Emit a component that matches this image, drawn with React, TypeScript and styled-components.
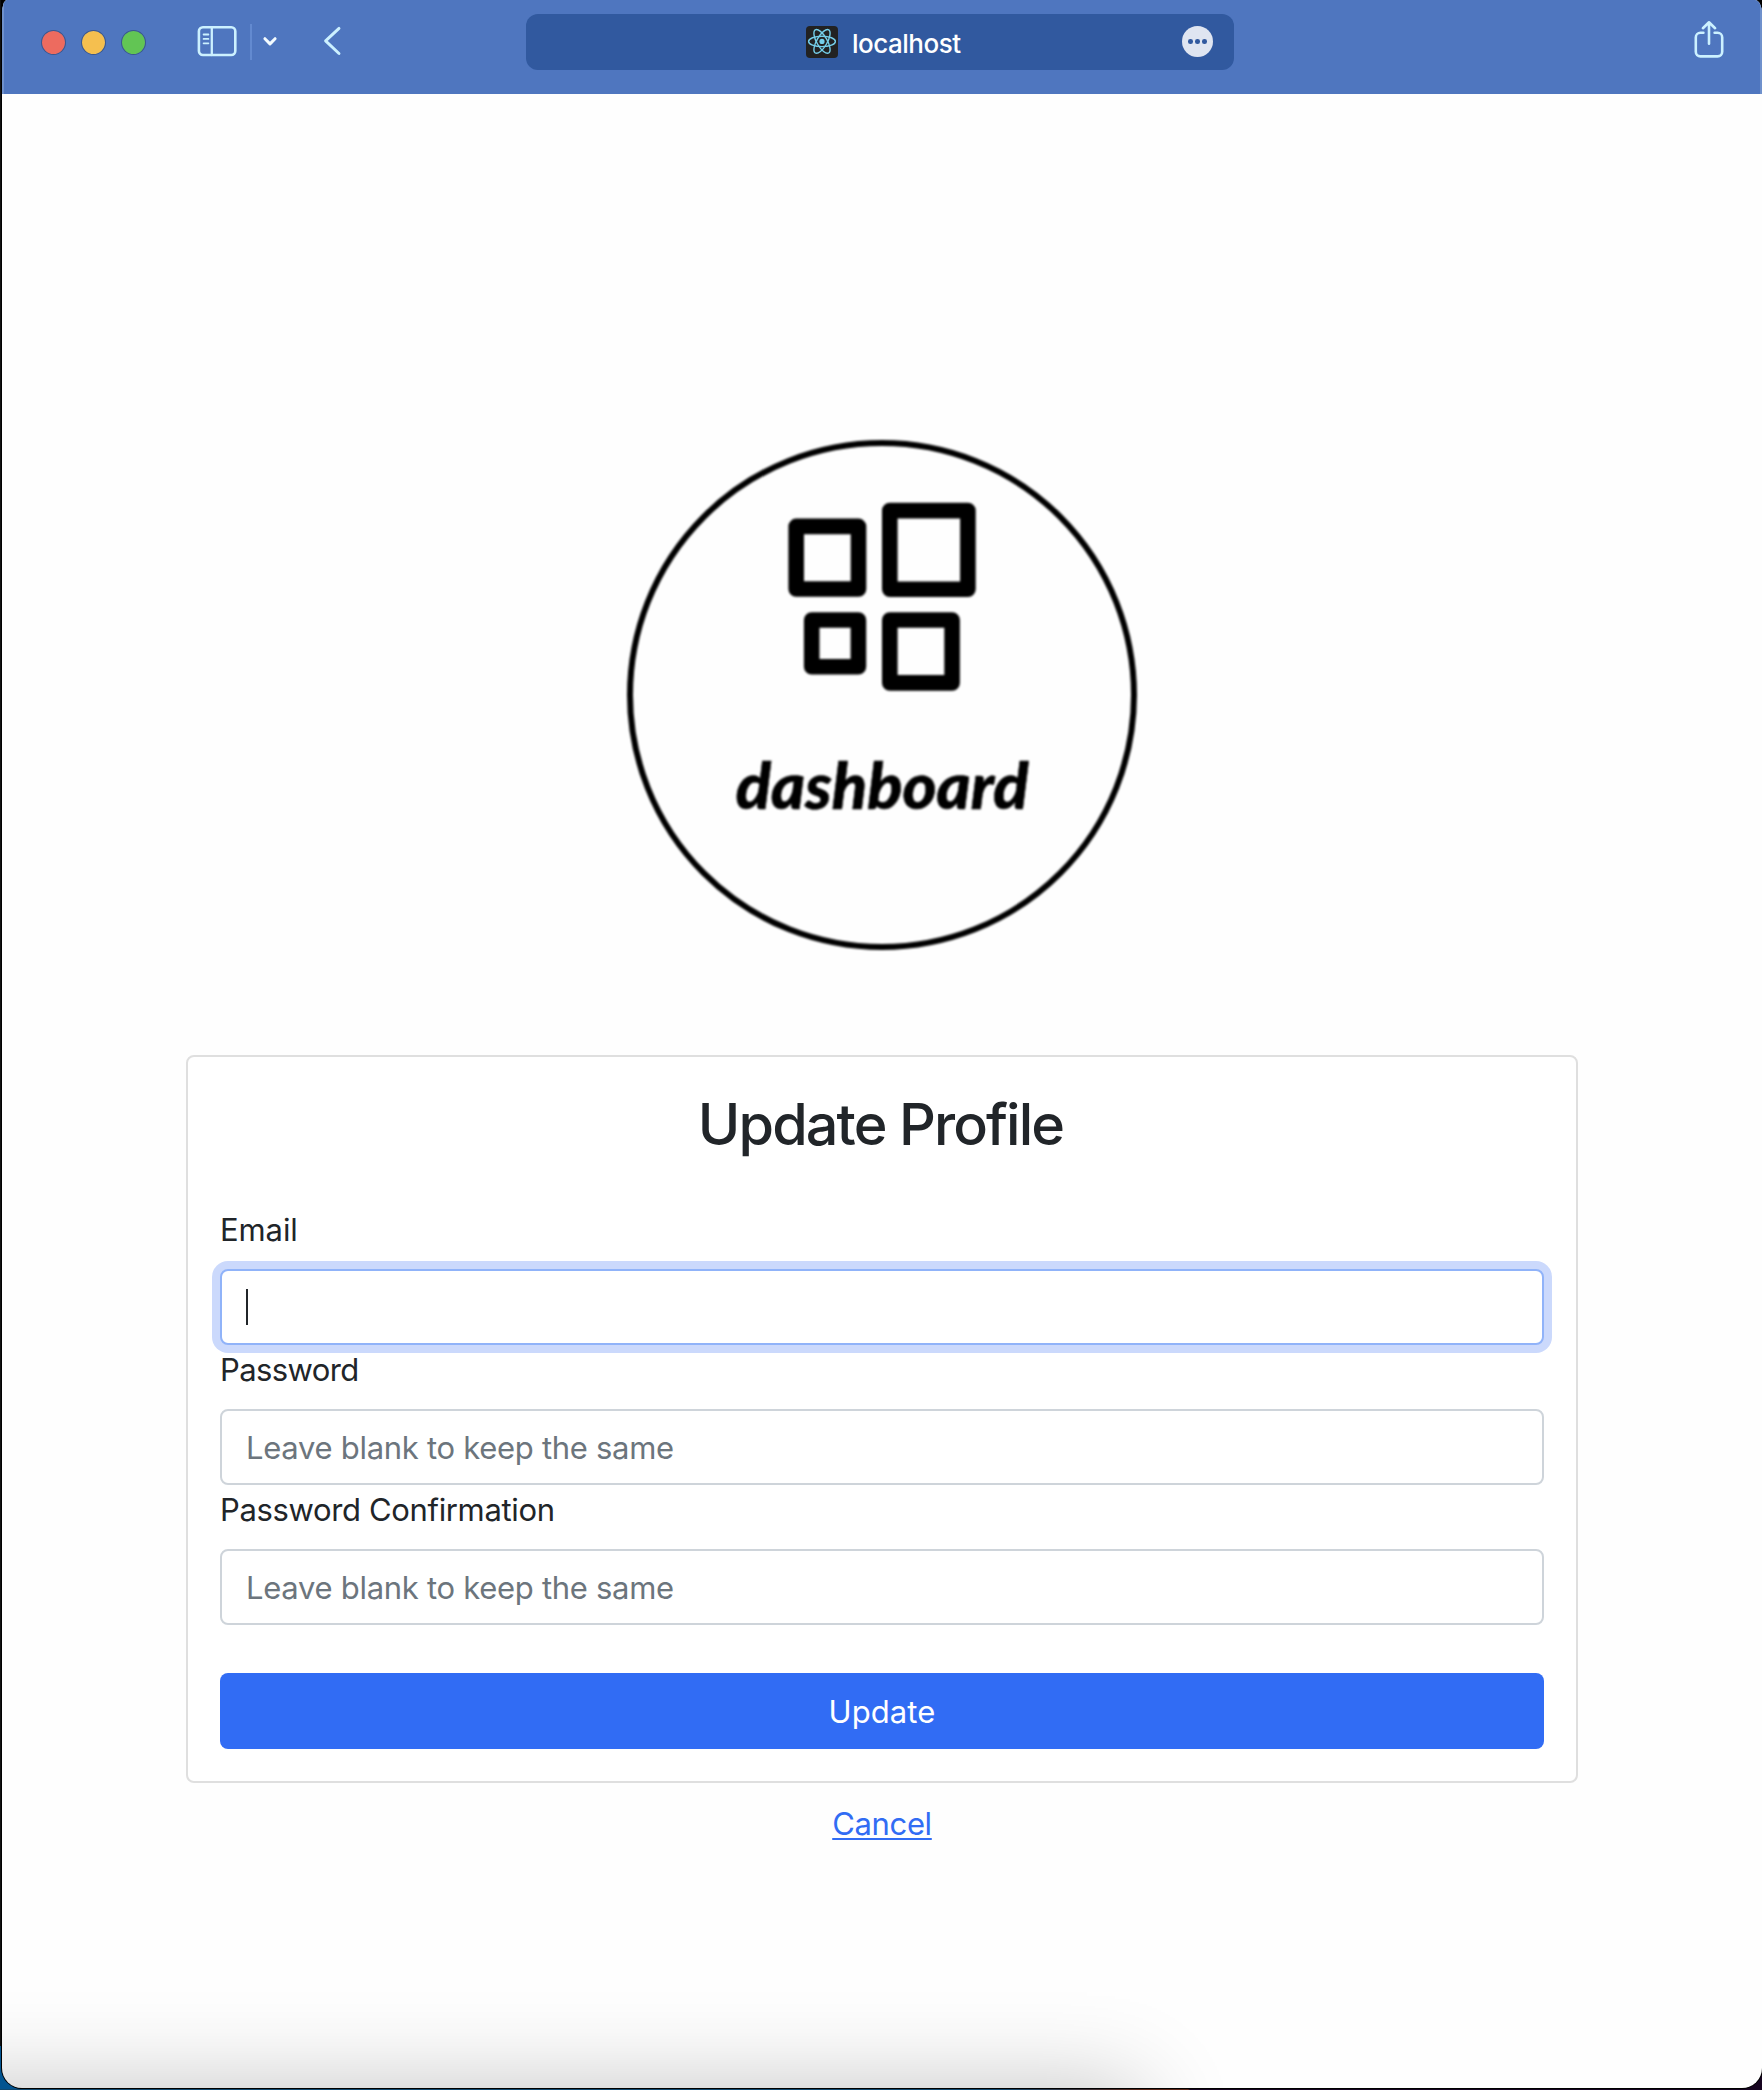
import React from "react";
import styled, { createGlobalStyle, css } from "styled-components";

const FONT = `Inter, "Liberation Sans", sans-serif`;
const INK = "#212529";
const BLUE = "#316cf4";
const ICON = "#ccf1ff";

const GlobalStyle = createGlobalStyle`
  *, *::before, *::after { box-sizing: border-box; }
  body {
    margin: 0;
    font-family: ${FONT};
    color: ${INK};
    background: #000;
  }
`;

const Desktop = styled.div`
  height: 2090px;
  padding: 0 0 2px 2px;
  overflow: hidden;
  background:
    linear-gradient(90deg, #10486f 0 1000px, #5a2417 1140px 1188px, #160420 1190px) 0 100% / 100% 1px no-repeat,
    linear-gradient(#035490, #035490) 0 100% / 20px 44px no-repeat,
    linear-gradient(#160420, #160420) 100% 100% / 30px 30px no-repeat,
    linear-gradient(90deg, #111 1px, #000 1px);
`;

const Window = styled.div`
  position: relative;
  display: flex;
  flex-direction: column;
  height: 2088px;
  background: #fefefe;
  overflow: hidden;
  border-radius: 5px 7px 20px 20px / 14px 14px 20px 20px;
  box-shadow: 0 0 0 1px #000;
`;

const FloorShade = styled.div`
  position: absolute;
  top: 100%;
  left: -200px;
  width: 1337px;
  height: 300px;
  box-shadow: 0 0 88px rgba(0, 0, 0, 0.24);
`;

const Toolbar = styled.header`
  display: grid;
  grid-template-columns: 522px 708px 1fr;
  align-items: center;
  flex: none;
  height: 94px;
  padding-bottom: 10px;
  background: #4f76bf;
  border: solid #6f91cc;
  border-width: 0 2px;
`;

const ToolGroup = styled.div`
  display: flex;
  align-items: center;
  padding-left: 37px;
`;

const TrafficLights = styled.div`
  display: flex;
  gap: 15px;
  margin-right: 51px;
`;

const Light = styled.span<{ $color: string }>`
  width: 25px;
  height: 25px;
  border-radius: 50%;
  border: 1px solid rgba(40, 60, 100, 0.55);
  background: ${(p) => p.$color};
  background-clip: padding-box;
`;

const Divider = styled.span`
  width: 2px;
  height: 36px;
  margin: 0 11px 0 12.5px;
  background: #638ad0;
`;

const Glyph = styled.svg`
  display: block;
  flex: none;
  fill: none;
  stroke: ${ICON};
  stroke-linecap: round;
  stroke-linejoin: round;
  overflow: visible;
`;

const ChevronGlyph = styled(Glyph)`
  stroke: #f3fbff;
`;

const BackGlyph = styled(Glyph)`
  margin-left: 47px;
`;

const AddressBar = styled.div`
  display: flex;
  align-items: center;
  height: 56px;
  padding: 0 21px 0 280px;
  border-radius: 12px;
  background: #31599f;
`;

const Favicon = styled.svg`
  width: 32px;
  height: 32px;
  margin-right: 14px;
  border-radius: 4px;
  background: #222;
`;

const Host = styled.span`
  padding-top: 2px;
  font-size: 26px;
  font-weight: 500;
  letter-spacing: -0.5px;
  color: #fff;
`;

const MoreButton = styled.span`
  display: flex;
  align-items: center;
  justify-content: center;
  gap: 2.6px;
  width: 31px;
  height: 31px;
  margin: -1px 0 0 auto;
  border-radius: 50%;
  background: #dfe5f1;
`;

const Dot = styled.i`
  width: 4.6px;
  height: 4.6px;
  border-radius: 50%;
  background: #31599f;
`;

const ShareSlot = styled.div`
  display: flex;
  justify-content: flex-end;
  padding-right: 36.5px;
`;

const Main = styled.main`
  display: flex;
  flex-direction: column;
  align-items: center;
  padding-top: 343px;
`;

const Logo = styled.svg`
  display: block;
  width: 516px;
  height: 516px;
  fill: none;
  stroke: #000;
  stroke-linejoin: round;
  filter: blur(0.8px);
`;

const LogoWord = styled.text`
  font: italic 900 65px Lato, sans-serif;
  fill: #000;
  stroke: #000;
  stroke-width: 0.6px;
`;

const Card = styled.section`
  width: 1392px;
  margin-top: 102px;
  padding: 32px;
  border: 2px solid #dfdfdf;
  border-radius: 8px;
  background: #fff;
`;

const Title = styled.h2`
  margin: 0 0 46px;
  padding-right: 3px;
  font-size: 57.5px;
  font-weight: 520;
  line-height: 70px;
  letter-spacing: -1.9px;
  text-align: center;
`;

const Field = styled.div`
  position: relative;
  display: flex;
  flex-direction: column;
`;

const Label = styled.label<{ $tracking?: string }>`
  padding-top: 1px;
  margin-bottom: 15px;
  font-size: 31px;
  font-weight: 430;
  line-height: 48px;
  letter-spacing: ${(p) => p.$tracking ?? "-0.35px"};
`;

const Input = styled.input<{ $focused?: boolean }>`
  width: 100%;
  height: 76px;
  padding: 0 24px;
  font: 430 31px ${FONT};
  letter-spacing: -0.29px;
  color: ${INK};
  background: #fff;
  border: 2px solid #ced4da;
  border-radius: 8px;
  outline: none;
  caret-color: transparent;
  &::placeholder {
    color: #6c757d;
    opacity: 1;
  }
  ${(p) =>
    p.$focused &&
    css`
      border-color: #90b3f9;
      box-shadow: 0 0 0 8px #cbd9fc;
    `}
`;

const Caret = styled.span`
  position: absolute;
  left: 26px;
  bottom: 20px;
  width: 2px;
  height: 36px;
  background: ${INK};
`;

const SubmitButton = styled.button`
  display: block;
  width: 100%;
  height: 76px;
  margin-top: 48px;
  padding: 0;
  border: 0;
  border-radius: 8px;
  background: ${BLUE};
  color: #fff;
  font: 430 31px ${FONT};
  letter-spacing: 0.1px;
`;

const CancelLink = styled.a`
  margin-top: 17px;
  font-size: 31px;
  font-weight: 430;
  line-height: 48px;
  letter-spacing: -0.35px;
  color: ${BLUE};
  text-decoration: underline;
  text-decoration-thickness: 2px;
  text-underline-offset: 3px;
`;

const LIGHTS = ["#ed6b5f", "#f5bf4f", "#62c554"];

const FIELDS = [
  { id: "email", label: "Email", tracking: "-0.1px", focused: true },
  { id: "password", label: "Password", tracking: "-0.6px", placeholder: "Leave blank to keep the same" },
  { id: "confirm", label: "Password Confirmation", placeholder: "Leave blank to keep the same" },
];

function BrowserToolbar() {
  return (
    <Toolbar>
      <ToolGroup>
        <TrafficLights>
          {LIGHTS.map((c) => (
            <Light key={c} $color={c} />
          ))}
        </TrafficLights>
        <Glyph width="40" height="32" viewBox="0 0 40 32" strokeWidth="2.6">
          <rect x="1.900" y="1.200" width="36.400" height="27.800" rx="4" />
          <path d="M14.800 1.200v27.800" strokeWidth="2.300" />
          <path d="M6.600 8.500h4.800M6.600 12.900h4.800M6.600 17.300h4.800" strokeWidth="1.800" />
        </Glyph>
        <Divider />
        <ChevronGlyph width="14" height="10" viewBox="0 0 14 10" strokeWidth="3">
          <path d="M1.900 1.700 7 6.900l5.100-5.200" />
        </ChevronGlyph>
        <BackGlyph width="17" height="30" viewBox="0 0 17 30" strokeWidth="2.900">
          <path d="M15 1.400 1.600 13.900l13.400 12.600" />
        </BackGlyph>
      </ToolGroup>
      <AddressBar>
        <Favicon viewBox="0 0 32 32" fill="none" stroke="#75cfea" strokeWidth="1.400">
          <circle cx="16" cy="15.400" r="2.600" fill="#75cfea" stroke="none" />
          {[0, 60, 120].map((a) => (
            <ellipse key={a} cx="16" cy="15.400" rx="13.400" ry="5.200" transform={`rotate(${a} 16 15.400)`} />
          ))}
        </Favicon>
        <Host>localhost</Host>
        <MoreButton>
          <Dot />
          <Dot />
          <Dot />
        </MoreButton>
      </AddressBar>
      <ShareSlot>
        <Glyph width="30" height="42" viewBox="0 0 30 42" strokeWidth="2.600">
          <path d="M9.400 11.800H6.400a4.600 4.600 0 0 0-4.600 4.600v14.400a4.600 4.600 0 0 0 4.600 4.600h17.200a4.600 4.600 0 0 0 4.600-4.600V16.400a4.600 4.600 0 0 0-4.600-4.600h-3" />
          <path d="M15 22.700V1.500M8.900 7.200 15 1.300l6.100 5.900" />
        </Glyph>
      </ShareSlot>
    </Toolbar>
  );
}

export default function App() {
  return (
    <>
      <GlobalStyle />
      <Desktop>
        <Window>
          <BrowserToolbar />
          <Main>
            <Logo viewBox="0 0 516 516">
              <circle cx="258" cy="258" r="252" strokeWidth="6" />
              <g strokeWidth="15.600">
                <rect x="172.200" y="89.400" width="62.300" height="62.600" />
                <rect x="265.800" y="73.600" width="78.100" height="78.600" />
                <rect x="187.700" y="183" width="46.700" height="46.700" />
                <rect x="265.800" y="183" width="62.300" height="62.900" />
              </g>
              <LogoWord x="111.700" y="371.600">dashboard</LogoWord>
            </Logo>
            <Card>
              <Title>Update Profile</Title>
              {FIELDS.map((f) => (
                <Field key={f.id}>
                  <Label htmlFor={f.id} $tracking={f.tracking}>
                    {f.label}
                  </Label>
                  <Input id={f.id} placeholder={f.placeholder} $focused={f.focused} />
                  {f.focused && <Caret />}
                </Field>
              ))}
              <SubmitButton>Update</SubmitButton>
            </Card>
            <CancelLink>Cancel</CancelLink>
          </Main>
          <FloorShade />
        </Window>
      </Desktop>
    </>
  );
}
